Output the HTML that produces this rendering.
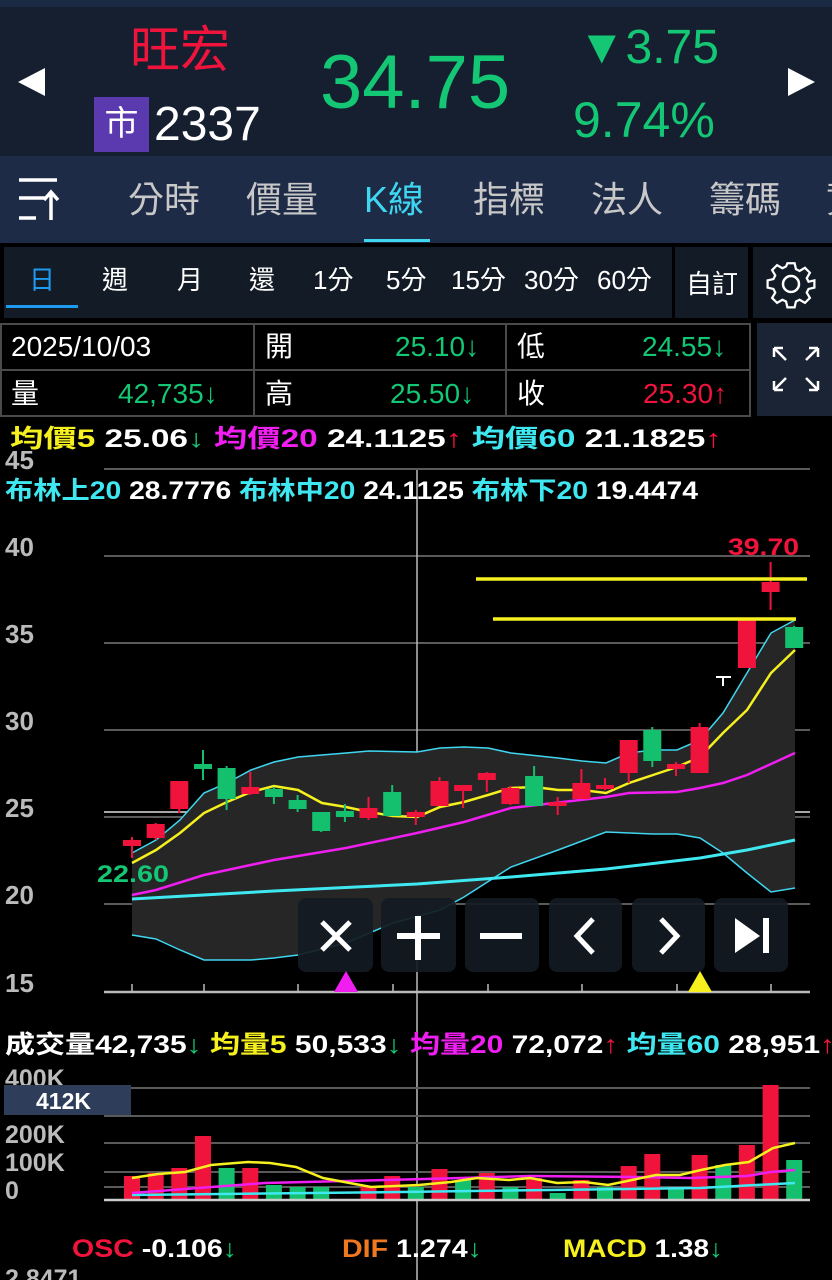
<!DOCTYPE html>
<html><head><meta charset="utf-8">
<style>
*{margin:0;padding:0;box-sizing:border-box}
body{width:832px;height:1280px;background:#000;overflow:hidden;position:relative;font-family:"Liberation Sans","Noto Sans CJK TC",sans-serif;color:#fff}
.a{position:absolute;white-space:nowrap}
</style></head><body>
<!-- header -->
<div class="a" style="left:0;top:0;width:832px;height:156px;background:#161f30;border-top:7px solid #1a2a44"></div>
<div class="a" style="left:18px;top:68px;width:0;height:0;border-top:14px solid transparent;border-bottom:14px solid transparent;border-right:27px solid #fff"></div>
<div class="a" style="left:788px;top:68px;width:0;height:0;border-top:14px solid transparent;border-bottom:14px solid transparent;border-left:27px solid #fff"></div>
<div class="a" style="left:130px;top:20px;font-size:50px;line-height:60px;color:#f0143c">旺宏</div>
<div class="a" style="left:94px;top:97px;width:55px;height:55px;background:#5a3aae;font-size:34px;line-height:55px;text-align:center">市</div>
<div class="a" style="left:154px;top:97px;font-size:48px;line-height:56px">2337</div>
<div class="a" style="left:320px;top:40px;font-size:76px;line-height:86px;color:#14c774">34.75</div>
<div class="a" style="left:578px;top:20px;font-size:48px;line-height:56px;color:#14c774">▼3.75</div>
<div class="a" style="left:573px;top:92px;font-size:50px;line-height:56px;color:#14c774">9.74%</div>
<!-- tabs -->
<div class="a" style="left:0;top:156px;width:832px;height:87px;background:#1e2b47"></div>
<svg class="a" style="left:16px;top:176px" width="54" height="48"><g stroke="#fff" stroke-width="3.5" fill="none"><path d="M3 4H41M3 22H29M3 42H20M35 44V17M28 24L35 16L42 24"/></g></svg>
<div class="a" style="left:128px;top:178px;font-size:36px;line-height:44px;color:#c8c8c8">分時</div>
<div class="a" style="left:246px;top:178px;font-size:36px;line-height:44px;color:#c8c8c8">價量</div>
<div class="a" style="left:364px;top:178px;font-size:36px;line-height:44px;color:#3fd6f0">K線</div>
<div class="a" style="left:473px;top:178px;font-size:36px;line-height:44px;color:#c8c8c8">指標</div>
<div class="a" style="left:591px;top:178px;font-size:36px;line-height:44px;color:#c8c8c8">法人</div>
<div class="a" style="left:709px;top:178px;font-size:36px;line-height:44px;color:#c8c8c8">籌碼</div>
<div class="a" style="left:826px;top:178px;font-size:36px;line-height:44px;color:#c8c8c8">資</div>
<div class="a" style="left:364px;top:239px;width:66px;height:3px;background:#3fd6f0"></div>
<!-- period bar -->
<div class="a" style="left:4px;top:247px;width:668px;height:71px;background:#131b26"></div>
<div class="a" style="left:675px;top:247px;width:73px;height:71px;background:#131b26"></div>
<div class="a" style="left:753px;top:247px;width:79px;height:71px;background:#131b26"></div>
<div class="a" style="left:6px;top:305px;width:72px;height:3px;background:#1e9af0"></div>
<div class="a" style="top:264px;font-size:26px;line-height:32px;left:29px;color:#1e9af0">日</div>
<div class="a" style="top:264px;font-size:26px;line-height:32px;left:102px">週</div>
<div class="a" style="top:264px;font-size:26px;line-height:32px;left:177px">月</div>
<div class="a" style="top:264px;font-size:26px;line-height:32px;left:249px">還</div>
<div class="a" style="top:264px;font-size:26px;line-height:32px;left:313px">1分</div>
<div class="a" style="top:264px;font-size:26px;line-height:32px;left:386px">5分</div>
<div class="a" style="top:264px;font-size:26px;line-height:32px;left:451px">15分</div>
<div class="a" style="top:264px;font-size:26px;line-height:32px;left:524px">30分</div>
<div class="a" style="top:264px;font-size:26px;line-height:32px;left:597px">60分</div>
<div class="a" style="top:268px;font-size:26px;line-height:32px;left:686px">自訂</div>
<svg class="a" style="left:765px;top:258px" width="52" height="52" viewBox="0 0 52 52"><g fill="none" stroke="#fff" stroke-width="2.5"><path d="M22 3h8l1.5 6.5 4 2 6-3.5 5.5 5.5-3.5 6 2 4L52 22v8l-6.5 1.5-2 4 3.5 6-5.5 5.5-6-3.5-4 2L30 52h-8l-1.5-6.5-4-2-6 3.5-5.5-5.5 3.5-6-2-4L0 30v-8l6.5-1.5 2-4-3.5-6 5.5-5.5 6 3.5 4-2z" transform="translate(26 26) scale(.9) translate(-26 -26)"/><circle cx="26" cy="26" r="8"/></g></svg>
<!-- info table -->
<div class="a" style="left:0;top:323px;width:751px;height:94px;border:2px solid #4a4a4a;background:#000"></div>
<div class="a" style="left:0;top:369px;width:751px;height:2px;background:#4a4a4a"></div>
<div class="a" style="left:253px;top:323px;width:2px;height:94px;background:#4a4a4a"></div>
<div class="a" style="left:505px;top:323px;width:2px;height:94px;background:#4a4a4a"></div>
<div class="a" style="left:757px;top:323px;width:75px;height:93px;background:#1b2434"></div>
<svg class="a" style="left:771px;top:345px" width="50" height="48"><g stroke="#fff" stroke-width="2.5" fill="none"><path d="M3 3L15 15M3 3V12M3 3H12M47 3L35 15M47 3V12M47 3H38M3 45L15 33M3 45V36M3 45H12M47 45L35 33M47 45V36M47 45H38"/></g></svg>
<div class="a" style="left:11px;top:331px;font-size:28px;line-height:32px">2025/10/03</div>
<div class="a" style="left:265px;top:331px;font-size:28px;line-height:32px">開</div>
<div class="a" style="left:395px;top:331px;font-size:28px;line-height:32px;color:#14c774">25.10↓</div>
<div class="a" style="left:517px;top:331px;font-size:28px;line-height:32px">低</div>
<div class="a" style="left:642px;top:331px;font-size:28px;line-height:32px;color:#14c774">24.55↓</div>
<div class="a" style="left:11px;top:378px;font-size:28px;line-height:32px">量</div>
<div class="a" style="left:118px;top:378px;font-size:28px;line-height:32px;color:#14c774">42,735↓</div>
<div class="a" style="left:265px;top:378px;font-size:28px;line-height:32px">高</div>
<div class="a" style="left:390px;top:378px;font-size:28px;line-height:32px;color:#14c774">25.50↓</div>
<div class="a" style="left:517px;top:378px;font-size:28px;line-height:32px">收</div>
<div class="a" style="left:643px;top:378px;font-size:28px;line-height:32px;color:#f0143c">25.30↑</div>
<!-- chart -->
<svg class="a" style="left:0;top:0" width="832" height="1280" viewBox="0 0 832 1280" font-family="Liberation Sans,Noto Sans CJK TC,sans-serif" font-weight="bold">
<g stroke="#5a5a5a" stroke-width="2"><path d="M104 469H810M104 556H810M104 643H810M104 730H810M104 817H810M104 904H810"/></g>
<path d="M104 812H810" stroke="#ddd" stroke-width="1.5"/>
<path d="M417 470V1280" stroke="#bbb" stroke-width="1.5"/>
<path d="M132 853L156 840L180 820L204 793L227 783L251 770L274 762L298 757L346 753L369 751L417 752L440 748L464 747L488 748L511 753L558 758L582 761L606 763L629 753L653 750L677 750L700 740L723 713L747 673L771 633L795 620L795 888L771 892L747 873L723 853L700 838L677 834L653 834L606 832L558 850L511 867L464 897L440 910L393 923L346 943L298 955L274 958L251 960L204 960L180 950L156 939L132 935Z" fill="#262626" stroke="none"/>
<g fill="none" stroke-width="1.5" stroke="#3fd6f0"><path d="M132 853L156 840L180 820L204 793L227 783L251 770L274 762L298 757L346 753L369 751L417 752L440 748L464 747L488 748L511 753L558 758L582 761L606 763L629 753L653 750L677 750L700 740L723 713L747 673L771 633L795 620"/><path d="M132 935L156 939L180 950L204 960L251 960L274 958L298 955L346 943L393 923L440 910L464 897L511 867L558 850L606 832L653 834L677 834L700 838L723 853L747 873L771 892L795 888"/></g>
<path d="M132 899L274 891L417 884L511 877L606 869L700 858L747 850L795 840" fill="none" stroke="#3fe8f0" stroke-width="3"/>
<path d="M132 895L156 890L204 875L274 860L346 848L417 833L464 822L511 808L606 797L629 793L677 792L700 788L723 783L747 775L795 753" fill="none" stroke="#f01ef0" stroke-width="2.5"/>
<path d="M132 863L156 850L180 833L204 813L227 802L251 792L274 786L298 790L322 803L346 807L369 812L393 816L417 817L440 807L464 802L488 795L511 788L535 787L558 790L582 790L606 793L629 783L653 775L677 767L700 757L723 733L747 710L771 673L795 650" fill="none" stroke="#f5f01e" stroke-width="2.5"/>
<g stroke-width="2">
<g fill="#f0143c" stroke="#f0143c">
<path d="M132 837V858M155.7 823V840M179.3 782V813M250.3 772V795M368.5 797V820M415.8 810V825M439.5 777V805M463.1 785V808M486.8 772V792M510.4 786V805M557.7 797V815M581.4 769V798M605 778V790M628.7 741V783M676 762V776M699.6 723V773M770.6 562V610"/>
<rect x="124" y="841" width="16" height="4"/><rect x="147.7" y="825" width="16" height="12"/><rect x="171.3" y="782" width="16" height="26"/><rect x="242.3" y="788" width="16" height="5"/><rect x="360.5" y="809" width="16" height="8"/><rect x="407.8" y="813" width="16" height="3"/><rect x="431.5" y="782" width="16" height="23"/><rect x="455.1" y="786" width="16" height="4"/><rect x="478.8" y="774" width="16" height="5"/><rect x="502.4" y="789" width="16" height="14"/><rect x="549.7" y="803" width="16" height="2"/><rect x="573.4" y="784" width="16" height="14"/><rect x="597" y="786" width="16" height="2"/><rect x="620.7" y="741" width="16" height="31"/><rect x="668" y="765" width="16" height="3"/><rect x="691.6" y="728" width="16" height="44"/><rect x="738.9" y="620" width="16" height="47"/><rect x="762.6" y="583" width="16" height="8"/>
</g>
<g fill="#14c06e" stroke="#14c06e">
<path d="M203 750V780M226.6 766V810M273.9 787V804M297.6 795V812M321.2 813V832M344.9 804V822M392.2 785V815M534.1 766V805M652.3 727V767M794.2 626V648"/>
<rect x="195" y="765" width="16" height="3"/><rect x="218.6" y="769" width="16" height="29"/><rect x="265.9" y="790" width="16" height="6"/><rect x="289.6" y="801" width="16" height="7"/><rect x="313.2" y="813" width="16" height="17"/><rect x="336.9" y="812" width="16" height="4"/><rect x="384.2" y="793" width="16" height="22"/><rect x="526.1" y="777" width="16" height="28"/><rect x="644.3" y="731" width="16" height="29"/><rect x="786.2" y="628" width="16" height="19"/>
</g>
<path d="M716 677H731M723 677V686" stroke="#fff"/>
</g>
<g stroke="#f5f01e" stroke-width="3.5"><path d="M476 579H807M493 619H796"/></g>
<text x="728" y="555" fill="#f0143c" font-size="24" textLength="71" lengthAdjust="spacingAndGlyphs">39.70</text>
<text x="97" y="882" fill="#14c774" font-size="24" textLength="72" lengthAdjust="spacingAndGlyphs">22.60</text>
<g fill="#bbb" font-size="26"><text x="5" y="469">45</text><text x="5" y="556">40</text><text x="5" y="643">35</text><text x="5" y="730">30</text><text x="5" y="817">25</text><text x="5" y="904">20</text><text x="5" y="992">15</text></g>
<g stroke="#bbb" stroke-width="2.5"><path d="M104 992H810"/><path d="M132 992V984M204 992V984M298 992V984M393 992V984M488 992V984M582 992V984M677 992V984M771 992V984" stroke-width="1.5"/></g>
<g fill="#141a22" fill-opacity="0.92"><rect x="298" y="898" width="75" height="74" rx="8"/><rect x="381" y="898" width="75" height="74" rx="8"/><rect x="465" y="898" width="74" height="74" rx="8"/><rect x="549" y="898" width="73" height="74" rx="8"/><rect x="632" y="898" width="73" height="74" rx="8"/><rect x="714" y="898" width="74" height="74" rx="8"/></g>
<g stroke="#fff" stroke-width="5" fill="none"><path d="M322 922L350 950M350 922L322 950"/><path d="M418 916V960M397 936H440" stroke-width="6"/><path d="M480 936H522" stroke-width="6"/><path d="M593 919L577 936L593 953"/><path d="M661 919L677 936L661 953"/></g>
<path d="M735 918V953L760 936Z" fill="#fff"/><rect x="763" y="918" width="6" height="35" fill="#fff"/>
<path d="M334 992L346 971L358 992Z" fill="#f01ef0"/><path d="M688 992L700 971L712 992Z" fill="#f5f01e"/>
<!-- legends -->
<g font-size="25"><text x="10" y="447" textLength="712" lengthAdjust="spacingAndGlyphs"><tspan fill="#f5f01e">均價5</tspan><tspan fill="#fff"> 25.06</tspan><tspan fill="#14c774">↓</tspan><tspan fill="#f01ef0"> 均價20</tspan><tspan fill="#fff"> 24.1125</tspan><tspan fill="#f0143c">↑</tspan><tspan fill="#3fe8f0"> 均價60</tspan><tspan fill="#fff"> 21.1825</tspan><tspan fill="#f0143c">↑</tspan></text>
<text x="5" y="499" textLength="693" lengthAdjust="spacingAndGlyphs"><tspan fill="#3fe8f0">布林上20</tspan><tspan fill="#fff"> 28.7776 </tspan><tspan fill="#3fe8f0">布林中20</tspan><tspan fill="#fff"> 24.1125 </tspan><tspan fill="#3fe8f0">布林下20</tspan><tspan fill="#fff"> 19.4474</tspan></text>
<text x="5" y="1053" textLength="830" lengthAdjust="spacingAndGlyphs"><tspan fill="#fff">成交量42,735</tspan><tspan fill="#14c774">↓ </tspan><tspan fill="#f5f01e">均量5</tspan><tspan fill="#fff"> 50,533</tspan><tspan fill="#14c774">↓ </tspan><tspan fill="#f01ef0">均量20</tspan><tspan fill="#fff"> 72,072</tspan><tspan fill="#f0143c">↑ </tspan><tspan fill="#3fe8f0">均量60</tspan><tspan fill="#fff"> 28,951</tspan><tspan fill="#f0143c">↑</tspan></text></g>
<!-- volume -->
<g stroke="#5a5a5a" stroke-width="2"><path d="M104 1088H810M104 1116H810M104 1143H810M104 1172H810M104 1187H810"/></g>
<g fill="#bbb" font-size="25"><text x="5" y="1087">400K</text><text x="5" y="1143">200K</text><text x="5" y="1171">100K</text><text x="5" y="1199">0</text></g>
<rect x="4" y="1085" width="127" height="30" fill="#2e3e5a"/><text x="36" y="1109" fill="#fff" font-size="23">412K</text>
<g fill="#f0143c"><rect x="124" y="1176" width="16" height="24"/><rect x="147.7" y="1173" width="16" height="27"/><rect x="171.3" y="1168" width="16" height="32"/><rect x="195" y="1136" width="16" height="64"/><rect x="242.3" y="1168" width="16" height="32"/><rect x="360.5" y="1187" width="16" height="13"/><rect x="384.2" y="1176" width="16" height="24"/><rect x="431.5" y="1169" width="16" height="31"/><rect x="478.8" y="1173" width="16" height="27"/><rect x="526.1" y="1178" width="16" height="22"/><rect x="573.4" y="1180" width="16" height="20"/><rect x="620.7" y="1166" width="16" height="34"/><rect x="644.3" y="1154" width="16" height="46"/><rect x="691.6" y="1155" width="16" height="45"/><rect x="738.9" y="1145" width="16" height="55"/><rect x="762.6" y="1085" width="16" height="115"/></g>
<g fill="#14c06e"><rect x="218.6" y="1168" width="16" height="32"/><rect x="265.9" y="1185" width="16" height="15"/><rect x="289.6" y="1187" width="16" height="13"/><rect x="313.2" y="1187" width="16" height="13"/><rect x="407.8" y="1187" width="16" height="13"/><rect x="455.1" y="1180" width="16" height="20"/><rect x="502.4" y="1187" width="16" height="13"/><rect x="549.7" y="1193" width="16" height="7"/><rect x="597" y="1187" width="16" height="13"/><rect x="668" y="1187" width="16" height="13"/><rect x="715.3" y="1165" width="16" height="35"/><rect x="786.2" y="1160" width="16" height="40"/></g>
<path d="M104 1200H810" stroke="#ccc" stroke-width="2.5"/>
<path d="M132 1195L400 1192L550 1190L700 1188L795 1183" fill="none" stroke="#3fe8f0" stroke-width="2.5"/>
<path d="M132 1193L265 1183L425 1179L531 1176L637 1177L690 1178L747 1176L771 1172L795 1170" fill="none" stroke="#f01ef0" stroke-width="2.5"/>
<path d="M132 1178L158 1174L185 1172L211 1165L248 1162L270 1163L296 1167L323 1178L371 1187L419 1185L451 1182L477 1178L509 1180L530 1178L557 1183L584 1182L608 1185L632 1180L656 1175L680 1175L701 1170L725 1165L749 1162L773 1148L795 1143" fill="none" stroke="#f5f01e" stroke-width="2.5"/>
<g font-size="25"><text x="72" y="1257" textLength="165" lengthAdjust="spacingAndGlyphs"><tspan fill="#f0143c">OSC</tspan><tspan fill="#fff"> -0.106</tspan><tspan fill="#14c774">↓</tspan></text>
<text x="342" y="1257" textLength="140" lengthAdjust="spacingAndGlyphs"><tspan fill="#f07820">DIF</tspan><tspan fill="#fff"> 1.274</tspan><tspan fill="#14c774">↓</tspan></text>
<text x="563" y="1257" textLength="160" lengthAdjust="spacingAndGlyphs"><tspan fill="#f5f01e">MACD</tspan><tspan fill="#fff"> 1.38</tspan><tspan fill="#14c774">↓</tspan></text>
<text x="5" y="1287" fill="#bbb">2.8471</text></g>
</svg>
</body></html>
